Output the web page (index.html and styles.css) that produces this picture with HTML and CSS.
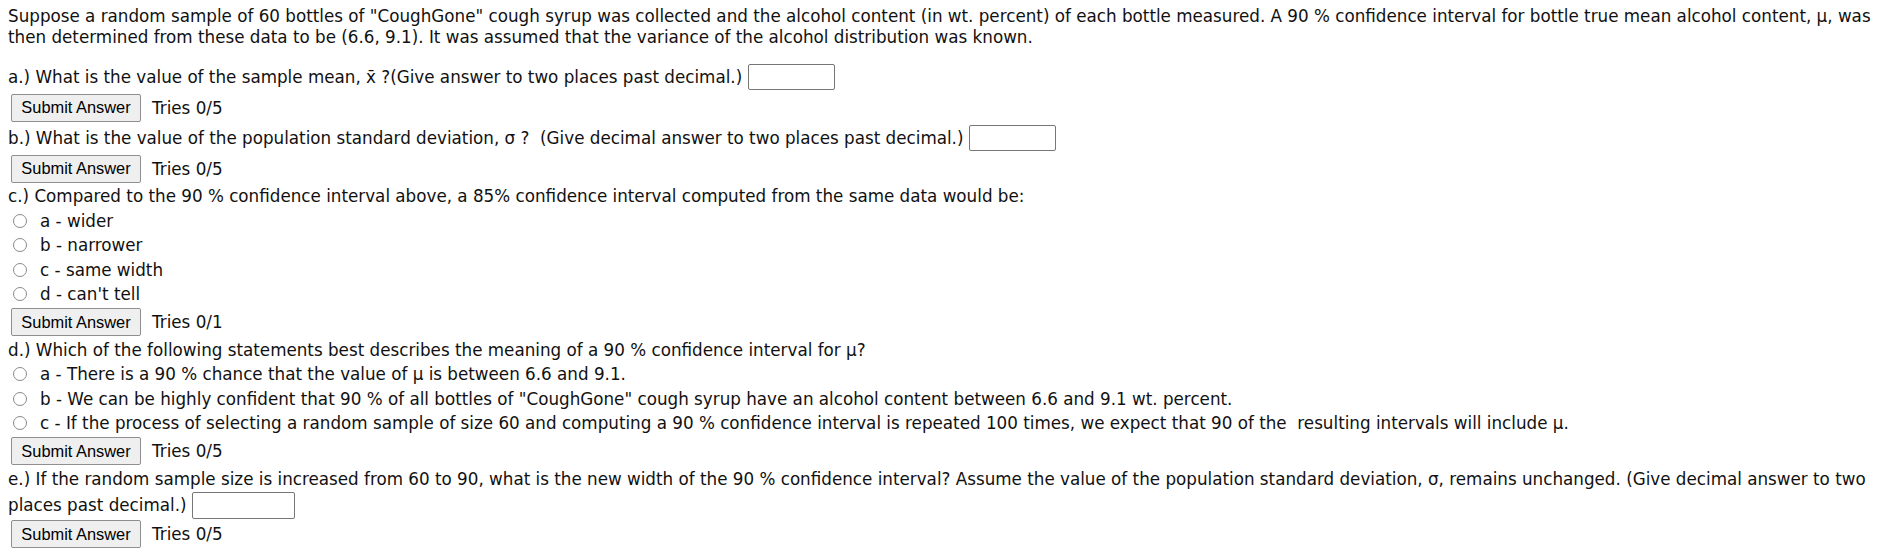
FILE: index.html
```html
<!DOCTYPE html>
<html>
<head>
<meta charset="utf-8">
<link rel="stylesheet" href="styles.css">
</head>
<body>
<div class="page">
  <p class="intro">Suppose a random sample of 60 bottles of "CoughGone" cough syrup was collected and the alcohol content (in wt. percent) of each bottle measured. A 90 % confidence interval for bottle true mean alcohol content, μ, was then determined from these data to be (6.6, 9.1). It was assumed that the variance of the alcohol distribution was known.</p>

  <div class="q-input"><span>a.) What is the value of the sample mean, x̄ ?(Give answer to two places past decimal.)</span><input class="ans" type="text"></div>
  <div class="submit-row"><button class="btn">Submit Answer</button><span>Tries 0/5</span></div>

  <div class="q-input"><span>b.) What is the value of the population standard deviation, σ ? &nbsp;(Give decimal answer to two places past decimal.)</span><input class="ans" type="text"></div>
  <div class="submit-row"><button class="btn">Submit Answer</button><span>Tries 0/5</span></div>

  <div class="text-row">c.) Compared to the 90 % confidence interval above, a 85% confidence interval computed from the same data would be:</div>
  <label class="opt"><input type="radio" name="c"><span>a - wider</span></label>
  <label class="opt"><input type="radio" name="c"><span>b - narrower</span></label>
  <label class="opt"><input type="radio" name="c"><span>c - same width</span></label>
  <label class="opt"><input type="radio" name="c"><span>d - can't tell</span></label>
  <div class="submit-row"><button class="btn">Submit Answer</button><span>Tries 0/1</span></div>

  <div class="text-row">d.) Which of the following statements best describes the meaning of a 90 % confidence interval for μ?</div>
  <label class="opt"><input type="radio" name="d"><span>a - There is a 90 % chance that the value of μ is between 6.6 and 9.1.</span></label>
  <label class="opt"><input type="radio" name="d"><span>b - We can be highly confident that 90 % of all bottles of "CoughGone" cough syrup have an alcohol content between 6.6 and 9.1 wt. percent.</span></label>
  <label class="opt"><input type="radio" name="d"><span>c - If the process of selecting a random sample of size 60 and computing a 90 % confidence interval is repeated 100 times, we expect that 90 of the &nbsp;resulting intervals will include μ.</span></label>
  <div class="submit-row"><button class="btn">Submit Answer</button><span>Tries 0/5</span></div>

  <p class="q-wrap">e.) If the random sample size is increased from 60 to 90, what is the new width of the 90 % confidence interval? Assume the value of the population standard deviation, σ, remains unchanged. (Give decimal answer to two places past decimal.) <input class="ans ans-wide" type="text"></p>
  <div class="submit-row"><button class="btn">Submit Answer</button><span>Tries 0/5</span></div>
</div>
</body>
</html>
```

FILE: styles.css
```css
html, body {
  margin: 0;
  background: #ffffff;
}

.page {
  padding: 6px 8px;
  font-family: "DejaVu Sans", Verdana, sans-serif;
  font-size: 16.75px;
  color: #111111;
}

.intro {
  margin: 0 0 14px;
  line-height: 21px;
}

.q-input {
  display: flex;
  align-items: center;
  gap: 6px;
  height: 30px;
}

.ans {
  box-sizing: border-box;
  width: 87px;
  height: 26px;
  margin: 0;
  border: 1px solid #767676;
  border-radius: 2px;
  background: #ffffff;
  font: inherit;
}

.ans-wide {
  width: 103px;
  height: 27px;
  vertical-align: middle;
}

.submit-row {
  display: flex;
  align-items: center;
  gap: 11px;
  height: 31px;
  padding-left: 3px;
}

.btn {
  box-sizing: border-box;
  width: 130px;
  height: 28px;
  padding: 0;
  margin: 0;
  font-family: "Liberation Sans", Arial, sans-serif;
  font-size: 16.4px;
  color: #000000;
  background: #efefef;
  border: 1px solid #8f8f8f;
  border-radius: 2px;
}

.text-row {
  display: flex;
  align-items: center;
  height: 24.5px;
}

.opt {
  display: flex;
  align-items: center;
  height: 24.5px;
}

.opt input {
  appearance: none;
  -webkit-appearance: none;
  box-sizing: border-box;
  width: 14px;
  height: 14px;
  margin: 0 13px 0 5px;
  border: 1px solid #8a8a8a;
  border-radius: 50%;
  background: #ffffff;
}

.q-wrap {
  margin: 0;
  line-height: 25px;
}
```
